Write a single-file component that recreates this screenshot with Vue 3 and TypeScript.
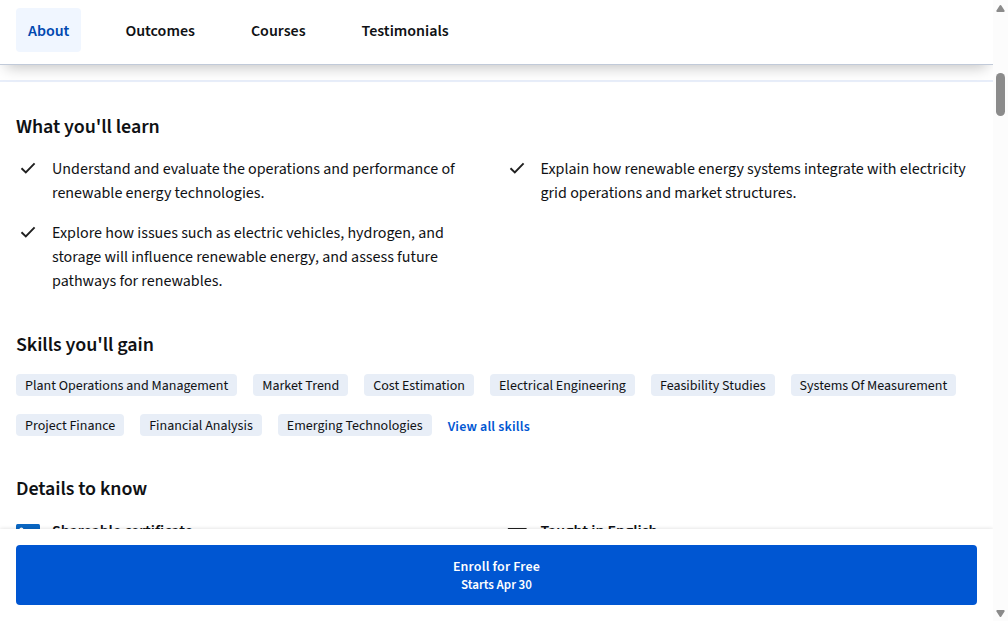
<script setup lang="ts">
interface Tab {
  label: string
  active?: boolean
}

const tabs: Tab[] = [
  { label: 'About', active: true },
  { label: 'Outcomes' },
  { label: 'Courses' },
  { label: 'Testimonials' },
]

const outcomes: string[] = [
  'Understand and evaluate the operations and performance of renewable energy technologies.',
  'Explain how renewable energy systems integrate with electricity grid operations and market structures.',
  'Explore how issues such as electric vehicles, hydrogen, and storage will influence renewable energy, and assess future pathways for renewables.',
]

const skills: string[] = [
  'Plant Operations and Management',
  'Market Trend',
  'Cost Estimation',
  'Electrical Engineering',
  'Feasibility Studies',
  'Systems Of Measurement',
  'Project Finance',
  'Financial Analysis',
  'Emerging Technologies',
]
</script>

<template>
  <div class="window">
    <div class="page">
      <header class="header">
        <nav class="tabs">
          <a v-for="tab in tabs" :key="tab.label" class="tab" :class="{ active: tab.active }">{{ tab.label }}</a>
        </nav>
      </header>

      <main class="content">
        <section class="learn">
          <h2>What you'll learn</h2>
          <ul class="grid">
            <li v-for="item in outcomes" :key="item" class="outcome">
              <svg class="check" viewBox="0 0 24 24" width="24" height="24" aria-hidden="true">
                <path d="M5.5 12.3l4.3 4.1 8.8-9.1" fill="none" stroke="#1f1f1f" stroke-width="1.9" />
              </svg>
              <span class="item-text">{{ item }}</span>
            </li>
          </ul>
        </section>

        <section class="skills">
          <h2>Skills you'll gain</h2>
          <div class="tags">
            <span v-for="skill in skills" :key="skill" class="tag">{{ skill }}</span>
            <a class="all">View all skills</a>
          </div>
        </section>

        <section class="details">
          <h2>Details to know</h2>
          <div class="grid">
            <div class="detail">
              <svg viewBox="0 0 24 24" width="24" height="24" aria-hidden="true">
                <rect width="24" height="24" rx="1.5" fill="#0a66c2" />
                <circle cx="5.4" cy="5.4" r="2" fill="#fff" />
                <path d="M3.6 9h3.6v11.4H3.6zM9.4 9h3.4v1.6c1.7-3 7.6-2.6 7.6 3.2v6.6h-3.6v-5.9c0-3.3-3.8-3-3.8 0v5.9H9.4z" fill="#fff" />
              </svg>
              <span class="item-text">Shareable certificate</span>
            </div>
            <div class="detail">
              <svg viewBox="0 0 24 24" width="24" height="24" aria-hidden="true">
                <path d="M3.5 4.7h17.5v11h-10l-4.5 4v-4h-3z" fill="none" stroke="#1f1f1f" stroke-width="1.5" stroke-linejoin="round" />
              </svg>
              <span class="item-text">Taught in English</span>
            </div>
          </div>
        </section>
      </main>

      <footer class="footer">
        <button class="enroll" type="button">
          <span class="enroll-title">Enroll for Free</span>
          <span class="enroll-date">Starts Apr 30</span>
        </button>
      </footer>
    </div>

    <div class="scrollbar">
      <svg viewBox="0 0 15 12" width="15" height="12" aria-hidden="true">
        <path d="M7.5 6l3.2 5H4.3z" fill="#8b8b8b" stroke="#8b8b8b" stroke-width="2" stroke-linejoin="round" />
      </svg>
      <div class="thumb"></div>
      <svg class="down" viewBox="0 0 15 12" width="15" height="12" aria-hidden="true">
        <path d="M7.5 7l3.2-5H4.3z" fill="#8b8b8b" stroke="#8b8b8b" stroke-width="2" stroke-linejoin="round" />
      </svg>
    </div>
  </div>
</template>

<style>
body {
  margin: 0;
  overflow: hidden;
  background: #fff;
}
</style>

<style scoped>
.window {
  display: flex;
  width: 1008px;
  height: 621px;
  overflow: hidden;
  color: #0f1114;
  font-family: "Source Sans 3", "Source Sans Pro", "Noto Sans CJK SC", "Noto Sans", sans-serif;
  font-size: 16px;
  line-height: 24px;
}
.page {
  display: flex;
  flex-direction: column;
  width: 993px;
  height: 621px;
  overflow: hidden;
}
.header {
  flex: none;
  position: relative;
  box-sizing: border-box;
  height: 65px;
  padding: 8px 16px 0;
  background: #fff;
  border-bottom: 1px solid #c1cad9;
  box-shadow: 0 8px 14px -6px rgba(0, 0, 0, 0.25);
}
.tabs {
  display: flex;
  gap: 32px;
}
.tab {
  height: 44px;
  padding: 0 12px;
  line-height: 46px;
  font-weight: 600;
  border-radius: 4px;
}
.tab.active {
  color: #0048b0;
  background: #f0f6ff;
}
.content {
  flex: 1;
  min-height: 0;
  overflow: hidden;
  margin-top: 15px;
  padding: 0 16px;
  border-top: 2px solid #e8eefa;
}
h2 {
  height: 24px;
  margin: 0;
  font-size: 20px;
  line-height: 26px;
  letter-spacing: -0.07px;
  font-weight: 600;
}
.learn {
  padding-top: 32px;
}
.grid {
  display: grid;
  grid-template-columns: 1fr 1fr;
  gap: 16px;
  margin: 0;
  padding: 0;
  list-style: none;
}
.learn .grid {
  margin-top: 18px;
}
.outcome {
  display: flex;
  gap: 12px;
}
.item-text {
  padding-top: 1px;
  margin-bottom: -1px;
}
.check {
  flex: none;
}
.skills {
  padding-top: 40px;
}
.tags {
  display: flex;
  flex-wrap: wrap;
  gap: 18px 16px;
  margin-top: 18px;
}
.tag {
  height: 22px;
  padding: 0 9px;
  border-radius: 4px;
  background: #e8eef7;
  font-size: 14px;
  line-height: 24px;
}
.all {
  color: #0056d2;
  font-size: 14px;
  font-weight: 600;
  letter-spacing: 0.16px;
  line-height: 26px;
  height: 22px;
}
.details {
  padding-top: 40px;
}
.details .grid {
  margin-top: 18px;
}
.detail {
  display: flex;
  align-items: flex-start;
  gap: 12px;
  font-weight: 600;
  letter-spacing: -0.04px;
}
.detail svg {
  flex: none;
  margin-top: 6px;
}
.footer {
  flex: none;
  position: relative;
  box-sizing: border-box;
  height: 92px;
  padding: 16px;
  background: #fff;
  box-shadow: 0 0 4px rgba(0, 0, 0, 0.15);
}
.enroll {
  display: flex;
  flex-direction: column;
  align-items: center;
  justify-content: center;
  width: 100%;
  height: 60px;
  padding: 2px 0 0;
  border: 0;
  border-radius: 4px;
  color: #fff;
  background: #0056d2;
  font-family: inherit;
  font-weight: 600;
}
.enroll-title {
  font-size: 14px;
  line-height: 18px;
  letter-spacing: 0.17px;
}
.enroll-date {
  font-size: 13px;
  line-height: 18px;
}
.scrollbar {
  display: flex;
  flex-direction: column;
  width: 15px;
  height: 621px;
  background: #fcfcfc;
}
.thumb {
  width: 9px;
  height: 43px;
  margin: 61px 0 0 3px;
  border-radius: 5px;
  background: #8b8b8b;
}
.down {
  margin-top: auto;
}
</style>
